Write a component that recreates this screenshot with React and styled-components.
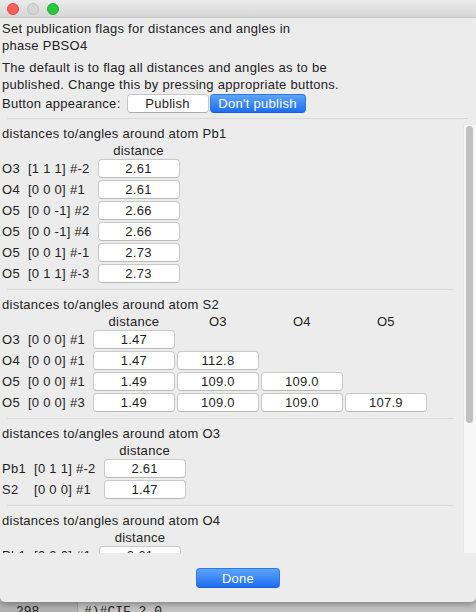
import React from 'react'
import styled, { createGlobalStyle } from 'styled-components'

const GlobalStyle = createGlobalStyle`
  html, body {
    margin: 0;
    padding: 0;
  }
  body {
    background: #bcbcbc;
    font-family: "Liberation Sans", Arial, sans-serif;
    overflow: hidden;
  }
`

const Screen = styled.div`
  width: 476px;
  height: 612px;
  display: flex;
  flex-direction: column;
  overflow: hidden;
`

const Window = styled.div`
  height: 602px;
  flex: none;
  display: flex;
  flex-direction: column;
  background: #ececec;
  border-radius: 0 0 5px 5px;
  box-shadow: 0 2px 7px rgba(0, 0, 0, 0.35);
  position: relative;
  z-index: 1;
  font-size: 13px;
  letter-spacing: 0.28px;
  color: #232323;
`

const TitleBar = styled.div`
  height: 17px;
  flex: none;
  display: flex;
  align-items: center;
  gap: 8px;
  padding-left: 7px;
  background: linear-gradient(#ebebeb, #d6d6d6);
  border-bottom: 1px solid #c4c4c4;
`

const Light = styled.span`
  width: 12px;
  height: 12px;
  box-sizing: border-box;
  border-radius: 50%;
  background: ${p => p.$bg};
  border: 1px solid ${p => p.$edge};
`

const Intro = styled.div`
  padding: 2px 2px 0;
`

const Para = styled.p`
  margin: 0 0 5px;
  line-height: 17px;
`

const AppearanceRow = styled.div`
  display: flex;
  align-items: center;
  height: 19px;
  margin-top: -4px;
`

const AppearanceLabel = styled.span`
  margin-right: 6px;
`

const PushButton = styled.button`
  width: ${p => p.$w}px;
  height: ${p => p.$h || 19}px;
  margin-left: ${p => p.$ml || 0}px;
  box-sizing: border-box;
  padding: 0;
  border-radius: 4px;
  font-family: inherit;
  font-size: 13px;
  letter-spacing: 0.28px;
  line-height: 17px;
  cursor: pointer;
  color: ${p => (p.$primary ? '#fff' : '#222')};
  background: ${p => (p.$primary ? 'linear-gradient(#5ea4fa, #1d6ef3)' : '#fff')};
  border: 1px solid ${p => (p.$primary ? '#2c76e8' : '#c6c6c6')};
  border-bottom-color: ${p => (p.$primary ? '#1b5fd0' : '#adadad')};
`

const TopRule = styled.div`
  height: 1px;
  flex: none;
  margin: 5px 8px 6px 7px;
  background: #d9d9d9;
`

const ScrollArea = styled.div`
  flex: 1;
  min-height: 0;
  display: flex;
`

const Viewport = styled.div`
  flex: 1;
  overflow: hidden;
  padding-left: 2px;
`

const Track = styled.div`
  width: 12px;
  flex: none;
  background: #f7f7f7;
  border-left: 1px solid #e4e4e4;
`

const Thumb = styled.div`
  width: 7px;
  height: 297px;
  margin: 1px 0 0 2px;
  border-radius: 4px;
  background: #c1c1c1;
`

const Section = styled.section`
  padding-bottom: 4px;
`

const SectionTitle = styled.div`
  line-height: 17px;
`

const Grid = styled.div`
  display: grid;
  grid-template-columns: auto auto repeat(${p => p.$cols}, 82px);
  grid-template-rows: 17px;
  grid-auto-rows: 21px;
  column-gap: 2px;
  justify-content: start;
`

const HeadCell = styled.div`
  line-height: 17px;
  text-align: center;
`

const AtomCell = styled.div`
  line-height: 19px;
  padding-right: 6px;
  white-space: nowrap;
`

const SymCell = styled.div`
  line-height: 19px;
  padding-right: 6px;
  white-space: nowrap;
`

const ValueBox = styled.div`
  height: 19px;
  box-sizing: border-box;
  background: #fff;
  border: 1px solid #c9c9c9;
  border-bottom-color: #b9b9b9;
  border-radius: 4px;
  line-height: 17px;
  text-align: center;
  color: #1f1f1f;
`

const Divider = styled.div`
  height: 1px;
  margin: 0 9px 6px 5px;
  background: #d9d9d9;
`

const Footer = styled.div`
  height: 49px;
  flex: none;
  display: flex;
  justify-content: center;
  box-sizing: border-box;
  padding-top: 15px;
`

const Editor = styled.div`
  flex: 1;
  display: flex;
  font-family: "Liberation Mono", "DejaVu Sans Mono", monospace;
  font-size: 13px;
  color: #222;
  line-height: 15px;
`

const Gutter = styled.div`
  width: 78px;
  flex: none;
  background: #b2b2b2;
  border-right: 1px solid #999;
  padding: 2px 0 0 16px;
  box-sizing: border-box;
`

const Code = styled.div`
  flex: 1;
  background: #c3c3c3;
  padding: 2px 0 0 6px;
`

const sections = [
  {
    atom: 'Pb1',
    heads: ['distance'],
    rows: [
      ['O3', '[1 1 1] #-2', ['2.61']],
      ['O4', '[0 0 0] #1', ['2.61']],
      ['O5', '[0 0 -1] #2', ['2.66']],
      ['O5', '[0 0 -1] #4', ['2.66']],
      ['O5', '[0 0 1] #-1', ['2.73']],
      ['O5', '[0 1 1] #-3', ['2.73']],
    ],
  },
  {
    atom: 'S2',
    heads: ['distance', 'O3', 'O4', 'O5'],
    rows: [
      ['O3', '[0 0 0] #1', ['1.47']],
      ['O4', '[0 0 0] #1', ['1.47', '112.8']],
      ['O5', '[0 0 0] #1', ['1.49', '109.0', '109.0']],
      ['O5', '[0 0 0] #3', ['1.49', '109.0', '109.0', '107.9']],
    ],
  },
  {
    atom: 'O3',
    heads: ['distance'],
    rows: [
      ['Pb1', '[0 1 1] #-2', ['2.61']],
      ['S2', '[0 0 0] #1', ['1.47']],
    ],
  },
  {
    atom: 'O4',
    heads: ['distance'],
    rows: [['Pb1', '[0 0 0] #1', ['2.61']]],
  },
]

const BondSection = ({ atom, heads, rows, last }) => (
  <>
    <Section>
      <SectionTitle>distances to/angles around atom {atom}</SectionTitle>
      <Grid $cols={heads.length}>
        <div />
        <div />
        {heads.map((h, i) => (
          <HeadCell key={i}>{h}</HeadCell>
        ))}
        {rows.map(([name, sym, vals], r) => (
          <React.Fragment key={r}>
            <AtomCell>{name}</AtomCell>
            <SymCell>{sym}</SymCell>
            {heads.map((_, c) =>
              vals[c] ? <ValueBox key={c}>{vals[c]}</ValueBox> : <div key={c} />
            )}
          </React.Fragment>
        ))}
      </Grid>
    </Section>
    {!last && <Divider />}
  </>
)

const App = () => {
  return (
    <Screen>
      <GlobalStyle />
      <Window>
        <TitleBar>
          <Light $bg="#fe5f57" $edge="#e2463f" />
          <Light $bg="#d6d6d6" $edge="#c2c2c2" />
          <Light $bg="#2ac83f" $edge="#1fae2f" />
        </TitleBar>
        <Intro>
          <Para>
            Set publication flags for distances and angles in
            <br />
            phase PBSO4
          </Para>
          <Para>
            The default is to flag all distances and angles as to be
            <br />
            published. Change this by pressing appropriate buttons.
          </Para>
          <AppearanceRow>
            <AppearanceLabel>Button appearance:</AppearanceLabel>
            <PushButton $w={82}>Publish</PushButton>
            <PushButton $w={96} $ml={1} $primary>
              Don't publish
            </PushButton>
          </AppearanceRow>
        </Intro>
        <TopRule />
        <ScrollArea>
          <Viewport>
            {sections.map((s, i) => (
              <BondSection key={s.atom} {...s} last={i === sections.length - 1} />
            ))}
          </Viewport>
          <Track>
            <Thumb />
          </Track>
        </ScrollArea>
        <Footer>
          <PushButton $w={84} $h={20} $primary>
            Done
          </PushButton>
        </Footer>
      </Window>
      <Editor>
        <Gutter>298</Gutter>
        <Code>#)#CIF_2.0</Code>
      </Editor>
    </Screen>
  )
}

export default App
